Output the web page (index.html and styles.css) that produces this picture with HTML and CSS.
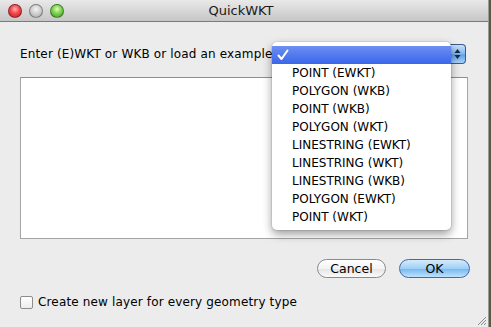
FILE: index.html
```html
<!DOCTYPE html>
<html>
<head>
<meta charset="utf-8">
<link rel="stylesheet" href="styles.css">
</head>
<body>
<div class="window">
  <div class="titlebar">
    <div class="lights">
      <span class="light red"></span>
      <span class="light gray"></span>
      <span class="light green"></span>
    </div>
    <div class="title">QuickWKT</div>
  </div>
  <div class="content">
    <div class="row">
      <span class="label">Enter (E)WKT or WKB or load an example</span>
      <div class="popup">
        <span class="popup-body"></span>
        <span class="popup-arrows">
          <svg width="7" height="12" viewBox="0 0 7 12"><path d="M3.5 1 L6.5 5 L0.5 5 Z" fill="#1b2a44"/><path d="M3.5 11 L6.5 7 L0.5 7 Z" fill="#1b2a44"/></svg>
        </span>
      </div>
    </div>
    <div class="textarea"></div>
    <div class="buttons">
      <button class="btn cancel">Cancel</button>
      <button class="btn ok">OK</button>
    </div>
    <label class="check">
      <span class="box"></span>
      <span>Create new layer for every geometry type</span>
    </label>
  </div>
  <div class="menu">
    <div class="item selected"><svg class="tick" width="12" height="12" viewBox="0 0 12 12"><path d="M1.5 6.5 L4.5 10 L10.5 1.5" fill="none" stroke="#fff" stroke-width="2" stroke-linecap="round" stroke-linejoin="round"/></svg></div>
    <div class="item">POINT (EWKT)</div>
    <div class="item">POLYGON (WKB)</div>
    <div class="item">POINT (WKB)</div>
    <div class="item">POLYGON (WKT)</div>
    <div class="item">LINESTRING (EWKT)</div>
    <div class="item">LINESTRING (WKT)</div>
    <div class="item">LINESTRING (WKB)</div>
    <div class="item">POLYGON (EWKT)</div>
    <div class="item">POINT (WKT)</div>
  </div>
  <svg class="grip" width="11" height="11" viewBox="0 0 11 11">
    <path d="M10 2 L2 10 M10 5 L5 10 M10 8 L8 10" stroke="#8a8a8a" stroke-width="1"/>
  </svg>
</div>
</body>
</html>
```

FILE: styles.css
```css
* { box-sizing: border-box; }
html, body { margin: 0; padding: 0; }
body {
  width: 491px;
  height: 327px;
  background: #5d5a3e;
  font-family: "DejaVu Sans", sans-serif;
  font-size: 12px;
  color: #000;
  overflow: hidden;
}
.window {
  position: relative;
  width: 489px;
  height: 327px;
  background: #ececec;
  border-right: 1px solid #9a9a9a;
  display: flex;
  flex-direction: column;
}
.titlebar {
  height: 22px;
  background: linear-gradient(#e9e9e9, #c6c6c6);
  border-bottom: 1px solid #7b7b7b;
  display: flex;
  align-items: center;
  position: relative;
}
.lights {
  display: flex;
  gap: 7px;
  padding-left: 8px;
}
.light {
  width: 14px;
  height: 14px;
  border-radius: 50%;
  display: block;
  border: 1px solid rgba(0,0,0,0.35);
}
.light.red { background: radial-gradient(circle at 50% 35%, #ffb1ae 0%, #f1474c 45%, #c61b22 100%); }
.light.gray { background: radial-gradient(circle at 50% 35%, #f4f4f4 0%, #cdcdcd 50%, #a9a9a9 100%); }
.light.green { background: radial-gradient(circle at 50% 35%, #d8ffb8 0%, #7fd150 45%, #3a9c1c 100%); }
.title {
  flex: 1;
  text-align: center;
  font-size: 13px;
  margin-left: -70px;
  color: #1a1a1a;
}
.content {
  flex: 1;
  display: flex;
  flex-direction: column;
  padding: 22px 20px 0 20px;
}
.row {
  display: flex;
  align-items: center;
  height: 20px;
}
.label { white-space: nowrap; letter-spacing: 0.15px; }
.popup {
  flex: 1;
  height: 20px;
  display: flex;
  margin-right: 2px;
}
.popup-body { flex: 1; }
.popup-arrows {
  width: 17px;
  height: 20px;
  border: 1px solid #3c5a88;
  border-left: none;
  border-radius: 0 4px 4px 0;
  background: linear-gradient(#c8e0f8, #7fb6ee 50%, #5e9fe8 55%, #a8d4fa);
  display: flex;
  align-items: center;
  justify-content: center;
}
.textarea {
  margin-top: 13px;
  height: 162px;
  background: #fff;
  border: 1px solid #a4a4a4;
  border-top-color: #8e8e8e;
}
.buttons {
  display: flex;
  justify-content: flex-end;
  gap: 13px;
  margin-top: 20px;
  margin-right: -2px;
}
.btn {
  font-family: "DejaVu Sans", sans-serif;
  font-size: 12.5px;
  height: 19px;
  border-radius: 10px;
  padding: 0;
  display: flex;
  align-items: center;
  justify-content: center;
  color: #000;
}
.cancel {
  width: 69px;
  border: 1px solid #8a8a8a;
  background: linear-gradient(#ffffff, #f3f3f3 50%, #e6e6e6 55%, #fafafa);
}
.ok {
  width: 71px;
  border: 1px solid #4769a0;
  background: linear-gradient(#d4ebfd, #9fcff6 50%, #7ab9f1 55%, #bde3fd);
}
.check {
  display: flex;
  align-items: center;
  gap: 5px;
  margin-top: 17px;
  letter-spacing: 0.15px;
}
.box {
  width: 13px;
  height: 13px;
  border: 1px solid #8c8c8c;
  border-radius: 2px;
  background: linear-gradient(#fff, #ececec);
  display: block;
}
.menu {
  position: absolute;
  left: 272px;
  top: 42px;
  width: 179px;
  padding: 4px 0;
  background: #fff;
  border-radius: 5px;
  box-shadow: 0 4px 10px rgba(0,0,0,0.4), 0 0 0 1px rgba(0,0,0,0.07);
}
.item {
  height: 18px;
  line-height: 18px;
  padding-left: 20px;
  white-space: nowrap;
}
.item.selected {
  background: linear-gradient(#6c8ff3, #3a66e9);
  position: relative;
}
.tick {
  position: absolute;
  left: 5px;
  top: 3px;
}
.grip {
  position: absolute;
  right: 1px;
  bottom: 1px;
}
```
